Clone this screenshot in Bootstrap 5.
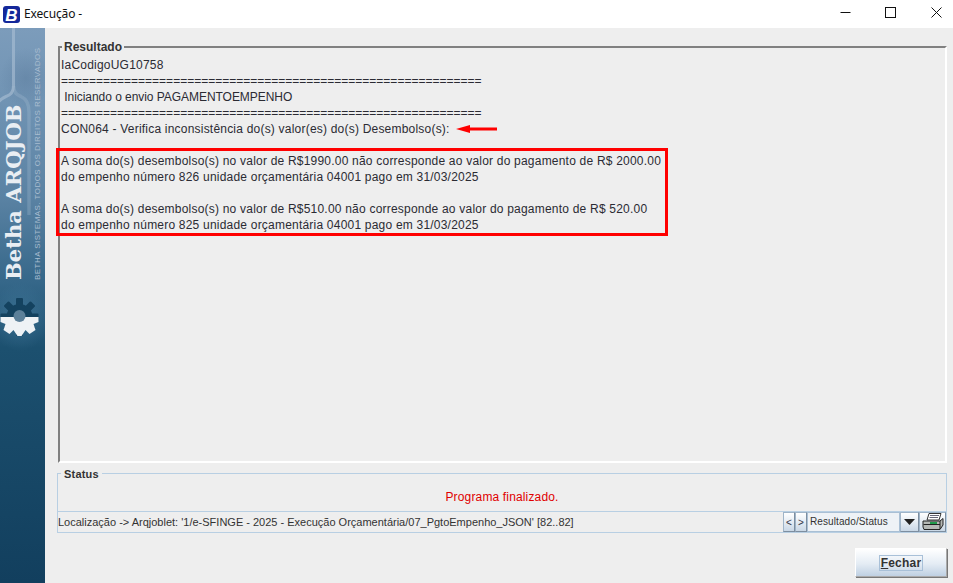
<!DOCTYPE html>
<html lang="pt">
<head>
<meta charset="utf-8">
<title>Execução</title>
<link href="https://cdn.jsdelivr.net/npm/bootstrap@5.3.0/dist/css/bootstrap.min.css" rel="stylesheet">
<style>
html,body{height:100%;margin:0;overflow:hidden}
body{font-family:"Liberation Sans",Arial,sans-serif;background:#eee;color:#222;width:953px;height:583px}
.win-title{height:28px;background:#fff;font-family:"Noto Sans","Open Sans",sans-serif;font-size:12px;letter-spacing:-.15px;color:#111;padding-left:3px}
.win-logo{width:17px;height:17px;margin-right:4px;flex:none}
.win-controls{margin-right:-6px;height:28px;padding-bottom:4px}
.win-btn{width:45.5px;height:24px;display:flex;align-items:center;justify-content:center}
.win-body{height:555px}
.side{width:45px;flex:none;background:radial-gradient(ellipse 30px 34px at 20px 289px,rgba(70,125,160,.55),rgba(70,125,160,0)),radial-gradient(ellipse 26px 30px at 26px 50px,rgba(60,90,125,.22),rgba(60,90,125,0)),linear-gradient(180deg,#7c9cbb 0,#7194b4 70px,#5a82a3 170px,#356789 255px,#1c506f 320px,#123f5e 100%);position:relative;overflow:hidden}
.side-lines{position:absolute;left:0;top:0}
.side-brand{position:absolute;left:0;top:80px;width:27px;height:172px;writing-mode:vertical-rl;transform:rotate(180deg);font-family:"DejaVu Serif",serif;font-weight:700;font-size:21px;letter-spacing:.05px;color:#e9eef3;line-height:27px;white-space:nowrap;text-align:left}
.side-copy{position:absolute;left:33px;top:18px;height:234px;width:10px;writing-mode:vertical-rl;transform:rotate(180deg);font-size:8px;letter-spacing:.46px;color:#a9bdd0;line-height:10px;white-space:nowrap;text-align:left}
.side-gear{position:absolute;left:0;top:266px}
.main{flex:1;min-width:0;padding:18px 6px 0 12px;position:relative}
.group-box{position:relative;margin-left:1px;height:417px;border-top:2px solid #808080;border-left:2px solid #808080;border-right:2px solid #fff;border-bottom:2px solid #fff;padding:9px 0 0 1px}
.group-title{position:absolute;left:2px;top:-8px;background:#eee;padding:0 2px;font-weight:700;font-size:12px;line-height:14px;color:#333}
.log{font-size:12px;line-height:16px;color:#2b2b33}
.log-row{height:16px;display:flex;align-items:center;white-space:pre;letter-spacing:.21px}
.log-eq{letter-spacing:0}
.log-caps{letter-spacing:-.05px}
.arrow{margin-left:6px;flex:none}
.hilite{margin:11px 0 0 -5px;padding:2px 0 0 2px;width:612px;height:88px;border:3px solid #f00}
.status-box{position:relative;margin-top:10px;border:1px solid #b8cfe3;height:60px;background:#eee}
.status-title{position:absolute;left:3px;top:-6px;background:#eee;padding:0 3px;font-weight:700;font-size:11px;line-height:13px;letter-spacing:.2px;color:#333}
.status-msg{height:37px;padding-top:15px;font-size:12px;line-height:16px;color:#e00000;text-align:center;padding-right:0;letter-spacing:.15px}
.status-bar{height:21px;border-top:1px solid #b8cfe3;font-size:11px;color:#333}
.loc{flex:1;letter-spacing:0;white-space:nowrap;overflow:hidden}
.tool{height:20px;border:1px solid #9fb4c8;border-right-color:#7d8ea0;border-bottom-color:#7d8ea0;background:linear-gradient(180deg,#fff,#dfe8f1 60%,#c9d7e6);display:flex;align-items:center;justify-content:center;font-size:10px;color:#334;flex:none}
.tool-s{width:12px}
.combo{width:93px;height:20px;font-size:10px;padding-left:2px;line-height:18px;background:#eef2f6;border:1px solid #a9bfd4;flex:none;letter-spacing:.1px}
.tool-m{width:19px}
.tool-p{width:27px}
.footer-row{padding-top:15px}
.close-btn{width:92px;height:29px;padding:0;border-radius:0;border:1px solid #aaa;border-top-color:#fff;border-left-color:#fff;box-shadow:1px 1px 0 #777;background:linear-gradient(180deg,#fff,#e4ecf4 55%,#bfd0e2);font-size:12px;font-weight:700;color:#333;display:flex;align-items:center;justify-content:center}
.close-in{border:1px solid #a8c0d8;padding:0 1px;line-height:14px;letter-spacing:.2px}
.close-in u{text-decoration-thickness:1px}
</style>
</head>
<body>
<div class="win-title d-flex align-items-center">
  <svg class="win-logo" viewBox="0 0 17 17"><rect width="17" height="17" rx="3" fill="#14289a"/><text x="8.2" y="14.5" text-anchor="middle" font-family="Liberation Sans" font-weight="700" font-style="italic" font-size="17" fill="#fff">B</text></svg>
  <span>Execução -</span>
  <div class="win-controls d-flex ms-auto">
    <div class="win-btn"><svg width="11" height="11"><path d="M0.5 5.5H10.5" stroke="#111"/></svg></div>
    <div class="win-btn"><svg width="11" height="11"><rect x=".5" y=".5" width="10" height="10" fill="none" stroke="#111"/></svg></div>
    <div class="win-btn"><svg width="11" height="11"><path d="M.5 .5L10.5 10.5M10.5 .5L.5 10.5" stroke="#111"/></svg></div>
  </div>
</div>
<div class="win-body d-flex">
  <div class="side">
    <svg class="side-lines" width="45" height="200" viewBox="0 0 45 200" fill="none">
      <path d="M13.5 0V58Q13.5 66 6 68.5Q0 71 -3 76" stroke="#a7bdd2" stroke-opacity=".65" stroke-width="3"/>
      <path d="M13.5 58Q13.5 66 21 68.5Q29 72 29 84V187" stroke="#a7bdd2" stroke-opacity=".3" stroke-width="3.5"/>
    </svg>
    <div class="side-brand">Betha ARQJOB</div>
    <div class="side-copy">BETHA SISTEMAS. TODOS OS DIREITOS RESERVADOS</div>
    <svg class="side-gear" width="40" height="46" viewBox="0 0 40 46">
      <g transform="translate(19.5 23)">
        <g fill="#14425f">
          <circle r="13"/>
          <rect x="-3.5" y="-19" width="7" height="38" rx="1"/>
          <rect x="-3.5" y="-19" width="7" height="38" rx="1" transform="rotate(45)"/>
          <rect x="-3.5" y="-19" width="7" height="38" rx="1" transform="rotate(90)"/>
          <rect x="-3.5" y="-19" width="7" height="38" rx="1" transform="rotate(135)"/>
        </g>
        <path d="M-19 0H19V5L14 7L16 13L10 17L6 13L2 19H-2L-6 13L-10 17L-16 13L-14 7L-19 5Z" fill="#eef2f5"/>
        <circle r="6" cy="-1" fill="#5c8099"/>
      </g>
    </svg>
  </div>
  <div class="main">
    <div class="group-box">
      <div class="group-title">Resultado</div>
      <div class="log">
        <div class="log-row">IaCodigoUG10758</div>
        <div class="log-row log-eq">============================================================</div>
        <div class="log-row log-caps"> Iniciando o envio PAGAMENTOEMPENHO</div>
        <div class="log-row log-eq">============================================================</div>
        <div class="log-row">CON064 - Verifica inconsistência do(s) valor(es) do(s) Desembolso(s):<svg class="arrow" width="42" height="10" viewBox="0 0 42 10"><path d="M0 5L14 1V3.5H41V6.5H14V9Z" fill="#f00"/></svg></div>
        <div class="hilite">
          <div class="log-row">A soma do(s) desembolso(s) no valor de R$1990.00 não corresponde ao valor do pagamento de R$ 2000.00</div>
          <div class="log-row">do empenho número 826 unidade orçamentária 04001 pago em 31/03/2025</div>
          <div class="log-row"></div>
          <div class="log-row">A soma do(s) desembolso(s) no valor de R$510.00 não corresponde ao valor do pagamento de R$ 520.00</div>
          <div class="log-row">do empenho número 825 unidade orçamentária 04001 pago em 31/03/2025</div>
        </div>
      </div>
    </div>
    <div class="status-box">
      <div class="status-title">Status</div>
      <div class="status-msg">Programa finalizado.</div>
      <div class="status-bar d-flex align-items-center">
        <div class="loc">Localização -&gt; Arqjoblet: '1/e-SFINGE - 2025 - Execução Orçamentária/07_PgtoEmpenho_JSON' [82..82]</div>
        <div class="tool tool-s">&lt;</div>
        <div class="tool tool-s">&gt;</div>
        <div class="combo">Resultado/Status</div>
        <div class="tool tool-m"><svg width="11" height="6"><path d="M0 0H11L5.5 6Z" fill="#222"/></svg></div>
        <div class="tool tool-p"><svg width="22" height="18" viewBox="0 0 22 18"><path d="M7 .5H19L17 7H5Z" fill="#fff" stroke="#333"/><path d="M8 2.5H17M7.5 4.5H16" stroke="#667"/><path d="M1 8H18L21 5.5V12L18 16.5H2L1 14Z" fill="#b5b8b5" stroke="#222"/><path d="M18 8V16M1.5 11.5H18" stroke="#222"/><rect x="8" y="9" width="7" height="2" fill="#1f9a4a"/></svg></div>
      </div>
    </div>
    <div class="footer-row d-flex justify-content-end">
      <button type="button" class="btn close-btn"><span class="close-in"><u>F</u>echar</span></button>
    </div>
  </div>
</div>
<script src="https://cdn.jsdelivr.net/npm/bootstrap@5.3.0/dist/js/bootstrap.bundle.min.js"></script>
</body>
</html>
